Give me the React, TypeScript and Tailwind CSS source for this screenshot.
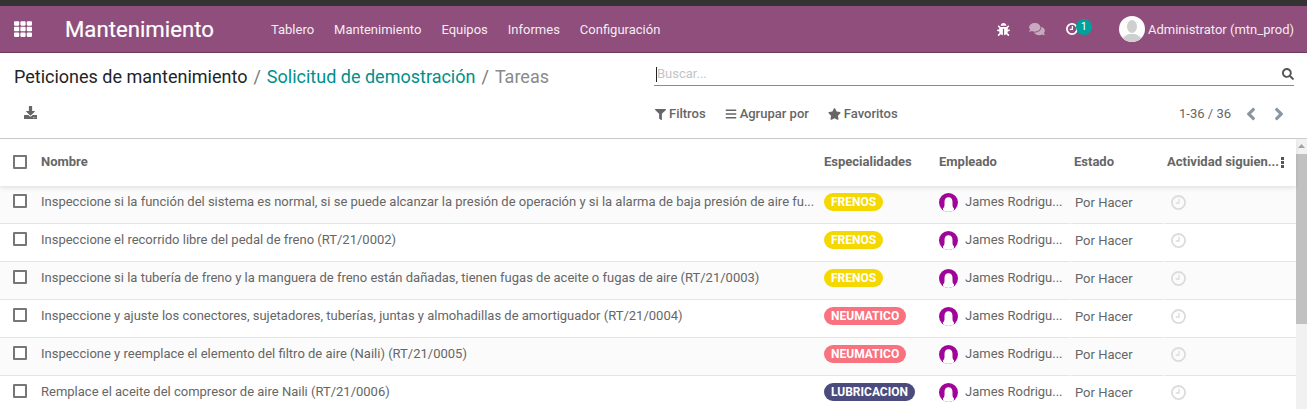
import React from "react";
import { FaBug, FaComments, FaFilter, FaBars, FaStar, FaSearch, FaDownload, FaAngleLeft, FaAngleRight, FaTh } from "react-icons/fa";

const rows = [
  { name: "Inspeccione si la función del sistema es normal, si se puede alcanzar la presión de operación y si la alarma de baja presión de aire fu...", tag: "FRENOS", cls: "bg-[#f4d800]" },
  { name: "Inspeccione el recorrido libre del pedal de freno (RT/21/0002)", tag: "FRENOS", cls: "bg-[#f4d800]" },
  { name: "Inspeccione si la tubería de freno y la manguera de freno están dañadas, tienen fugas de aceite o fugas de aire (RT/21/0003)", tag: "FRENOS", cls: "bg-[#f4d800]" },
  { name: "Inspeccione y ajuste los conectores, sujetadores, tuberías, juntas y almohadillas de amortiguador (RT/21/0004)", tag: "NEUMATICO", cls: "bg-[#f8727f]" },
  { name: "Inspeccione y reemplace el elemento del filtro de aire (Naili) (RT/21/0005)", tag: "NEUMATICO", cls: "bg-[#f8727f]" },
  { name: "Remplace el aceite del compresor de aire Naili (RT/21/0006)", tag: "LUBRICACION", cls: "bg-[#4b4c7d]" },
];

function Check() {
  return <span className="block w-[14px] h-[14px] border-2 border-[#777777] bg-white rounded-[1px]" />;
}

function Avatar({ id }: { id: number }) {
  return (
    <svg width="19" height="19" viewBox="0 0 19 19" className="shrink-0">
      <defs><clipPath id={`emp${id}`}><circle cx="9.5" cy="9.5" r="9.5" /></clipPath></defs>
      <circle cx="9.5" cy="9.5" r="9.5" fill="#a0059a" />
      <g clipPath={`url(#emp${id})`}>
        <path d="M9.5 4.2c2.6 0 4 2 4 4.8v3c0 1.5 .5 2.6 1.6 3.6L14.5 19h-10l-.6-3.4c1.1-1 1.6-2.1 1.6-3.6V9c0-2.8 1.4-4.8 4-4.8z" fill="#fff" />
      </g>
    </svg>
  );
}

function Clock({ size, stroke, color }: { size: number; stroke: number; color: string }) {
  return (
    <svg width={size} height={size} viewBox="0 0 16 16" fill="none" stroke={color} strokeWidth={stroke} className="shrink-0">
      <circle cx="8" cy="8" r={8 - stroke / 2} />
      <path d="M8.5 4v4.5H5" strokeWidth={stroke * 0.7} />
    </svg>
  );
}

export default function App() {
  return (
    <div className="w-[1307px] h-[409px] overflow-hidden bg-white font-['Roboto',sans-serif] text-[13px] text-[#666666] flex flex-col">
      <div className="h-[6px] bg-[#333333] shrink-0" />
      <nav className="h-[47px] shrink-0 bg-[#8f4e7c] border-b border-[#6d3a5e] flex items-center text-white">
        <FaTh className="ml-[14px] w-[18px] h-[18px]" />
        <span className="ml-[33px] text-[22.2px] leading-none pt-px [-webkit-text-stroke:0.2px_white]">Mantenimiento</span>
        <div className="ml-[57px] pt-[2px] flex gap-[20px] text-[13px] text-[#f4ecf2]">
          <span>Tablero</span>
          <span>Mantenimiento</span>
          <span>Equipos</span>
          <span>Informes</span>
          <span>Configuración</span>
        </div>
        <div className="ml-auto flex items-center">
          <FaBug className="w-[13px] h-[13px]" />
          <FaComments className="ml-[19px] w-[16px] h-[14px] text-[#c9a9c0]" />
          <div className="relative ml-[21px]">
            <Clock size={12} stroke={2.4} color="#ffffff" />
            <span className="absolute -top-[4px] left-[10px] w-[16px] h-[16px] rounded-full bg-[#00a09d] text-[11px] leading-[15px] text-center text-white">1</span>
          </div>
          <svg width="26" height="26" viewBox="0 0 26 26" className="ml-[41px]">
            <defs><clipPath id="av"><circle cx="13" cy="13" r="13" /></clipPath></defs>
            <circle cx="13" cy="13" r="13" fill="#fdfdfd" />
            <g clipPath="url(#av)" fill="#cfcfcf">
              <ellipse cx="13" cy="10.5" rx="5" ry="6.5" />
              <path d="M3 26c0-5 4-7 7-8h6c3 1 7 3 7 8z" />
            </g>
          </svg>
          <span className="ml-[3px] mr-[13px] pt-px text-[13px] text-[#f4ecf2]">Administrator (mtn_prod)</span>
        </div>
      </nav>

      <div className="h-[86px] shrink-0 border-b border-[#cccccc] flex">
        <div className="w-[654px] shrink-0 pl-[14px]">
          <div className="pt-[13px] text-[18px] leading-[21px] whitespace-nowrap">
            <span className="text-[#212529]">Peticiones de mantenimiento</span>
            <span className="mx-[6px] text-[#777777]">/</span>
            <span className="text-[#008f8c]">Solicitud de demostración</span>
            <span className="mx-[6px] text-[#777777]">/</span>
            <span className="text-[#8a8a8a]">Tareas</span>
          </div>
          <FaDownload className="ml-[10px] mt-[19px] w-[13px] h-[13px] text-[#666666]" />
        </div>
        <div className="flex-1 pr-[13px]">
          <div className="mt-[10px] h-[23px] border-b border-[#8a8a8a] flex items-center">
            <span className="w-px h-[15px] bg-[#222222] ml-[2px]" />
            <span className="text-[#c4c4c4] text-[13px]">Buscar...</span>
            <FaSearch className="ml-auto w-[12px] h-[12px] text-[#555555]" />
          </div>
          <div className="mt-[18px] flex items-center text-[13px] font-medium text-[#666666]">
            <FaFilter className="ml-px w-[11px] h-[11px]" />
            <span className="ml-[3px]">Filtros</span>
            <FaBars className="ml-[19px] w-[12px] h-[12px]" />
            <span className="ml-[3px]">Agrupar por</span>
            <FaStar className="ml-[19px] w-[13px] h-[12px]" />
            <span className="ml-[3px]">Favoritos</span>
            <span className="ml-auto font-normal text-[13px]">1-36 / 36</span>
            <FaAngleLeft className="ml-[13px] w-[14px] h-[20px] text-[#8a96a1]" />
            <FaAngleRight className="ml-[14px] mr-[8px] w-[14px] h-[20px] text-[#8a96a1]" />
          </div>
        </div>
      </div>

      <div className="flex flex-1 min-h-0">
        <div className="flex-1 min-w-0">
          <div className="h-[47px] pb-px flex items-center font-bold text-[13px] shadow-[0_2px_4px_rgba(0,0,0,0.1)] relative">
            <div className="w-[41px] pl-[13px] shrink-0"><Check /></div>
            <div className="w-[783px] shrink-0">Nombre</div>
            <div className="w-[115px] shrink-0">Especialidades</div>
            <div className="w-[135px] shrink-0">Empleado</div>
            <div className="w-[93px] shrink-0">Estado</div>
            <div className="flex-1 flex items-center justify-between pr-[12px] whitespace-nowrap">
              <span>Actividad siguien...</span>
              <span className="flex flex-col gap-px">
                <span className="block w-[3px] h-[3px] bg-[#555555]" />
                <span className="block w-[3px] h-[3px] bg-[#555555]" />
                <span className="block w-[3px] h-[3px] bg-[#555555]" />
              </span>
            </div>
          </div>
          {rows.map((r, i) => (
            <div key={i} className={`h-[38px] flex ${i % 2 === 0 ? "bg-[#fbfbfb]" : "bg-white"}`}>
              <div className="w-[1070px] shrink-0 flex items-center border-b border-[#e4e4e4] pb-[5px]">
                <div className="w-[41px] pl-[13px] shrink-0 mb-[2px]"><Check /></div>
                <div className="w-[783px] shrink-0 whitespace-nowrap">{r.name}</div>
                <div className="w-[115px] shrink-0">
                  <span className={`inline-block rounded-full px-[7px] h-[18px] text-[12px] leading-[18px] font-bold text-white ${r.cls}`}>{r.tag}</span>
                </div>
                <div className="flex-1 flex items-center min-w-0 whitespace-nowrap">
                  <Avatar id={i} />
                  <span className="ml-[7px]">James Rodrigu...</span>
                </div>
              </div>
              <div className="ml-px w-[92px] shrink-0 border-b border-[#e4e4e4] flex items-center pl-[4px] pb-[4px]">Por Hacer</div>
              <div className="ml-px flex-1 border-b border-[#e4e4e4] flex items-center pl-[7px] pb-[4px]">
                <Clock size={15} stroke={2} color="#dcdcdc" />
              </div>
            </div>
          ))}
        </div>
        <div className="w-[11px] shrink-0 bg-[#f1f1f1] pt-[5px] flex flex-col items-center">
          <svg width="7" height="4" viewBox="0 0 7 4" className="mb-[6px] shrink-0"><path d="M3.5 0L7 4H0z" fill="#a3a3a3" /></svg>
          <div className="h-[170px] w-full bg-[#c1c1c1] shrink-0" />
        </div>
      </div>
    </div>
  );
}
